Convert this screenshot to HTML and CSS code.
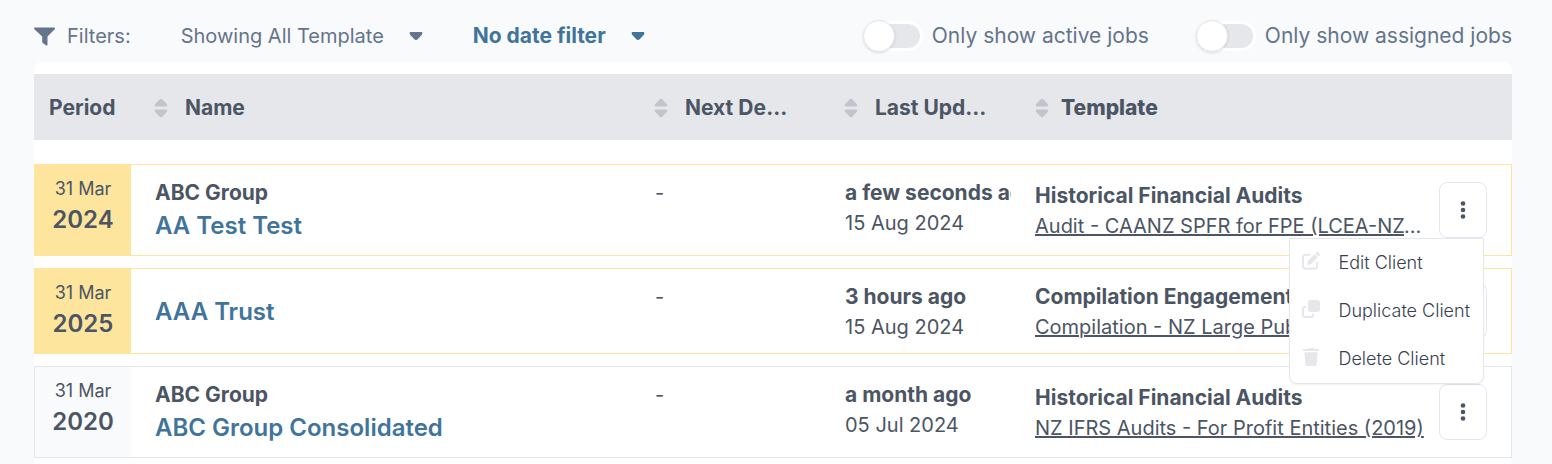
FILE: index.html
```html
<!DOCTYPE html>
<html lang="en">
<head>
  <meta charset="utf-8">
  <title>Jobs</title>
  <link rel="stylesheet" href="styles.css">
</head>
<body>
  <svg class="sprite" width="0" height="0" aria-hidden="true">
    <symbol id="caret" viewBox="0 0 14 10">
      <path d="M1.500 1h11c.9 0 1.100 1 .7 1.900-.3.700-.7 1.300-1.300 1.900L8.700 8.300c-1 1-2.400 1-3.400 0L2.100 4.800C1.500 4.200 1.100 3.600.8 2.900.4 2 .6 1 1.500 1z"/>
    </symbol>
    <symbol id="sort" viewBox="0 0 14 20">
      <path d="M5.700 1.300c.8-.8 1.800-.8 2.600 0l4.400 4.600c1 1.100.6 2.600-.6 2.600H1.900C.7 8.500.3 7 1.300 5.900zM1.900 11.500h10.200c1.200 0 1.600 1.500.6 2.600l-4.400 4.600c-.8.800-1.800.800-2.600 0l-4.400-4.600c-1-1.100-.6-2.600.6-2.600z"/>
    </symbol>
    <symbol id="dots" viewBox="0 0 6 20">
      <circle cx="3" cy="3.500" r="2.300"/><circle cx="3" cy="10" r="2.300"/><circle cx="3" cy="16.500" r="2.300"/>
    </symbol>
  </svg>

  <div class="page">
    <div class="filters">
      <div class="filters-title">
        <svg width="21" height="19" viewBox="0 0 21 19"><path d="M1 .5h19c1 0 1.300 1 .7 1.700L13.500 9.500v8c0 .9-.9 1.300-1.600.8l-3.100-2.300c-.4-.3-.6-.7-.6-1.200V9.500L.4 2.200C-.3 1.500 0 .5 1 .5z"/></svg>
        <span>Filters:</span>
      </div>
      <label class="dropdown">
        <select aria-label="Template filter"><option>Showing All Template</option></select>
        <svg width="14" height="10"><use href="#caret"/></svg>
      </label>
      <label class="dropdown dropdown-active">
        <select aria-label="Date filter"><option>No date filter</option></select>
        <svg width="14" height="10"><use href="#caret"/></svg>
      </label>
      <div class="toggles">
        <label class="toggle"><input type="checkbox"><span>Only show active jobs</span></label>
        <label class="toggle"><input type="checkbox"><span>Only show assigned jobs</span></label>
      </div>
    </div>

    <div class="panel">
      <table class="jobs">
        <colgroup>
          <col class="col-period">
          <col class="col-name">
          <col class="col-date">
          <col class="col-date">
          <col class="col-template">
          <col class="col-actions">
        </colgroup>
        <thead>
          <tr>
            <th class="period-head">Period</th>
            <th><button class="sort"><svg width="14" height="20"><use href="#sort"/></svg><span>Name</span></button></th>
            <th><button class="sort"><svg width="14" height="20"><use href="#sort"/></svg><span>Next Deadline</span></button></th>
            <th><button class="sort"><svg width="14" height="20"><use href="#sort"/></svg><span>Last Updated</span></button></th>
            <th class="template-head"><button class="sort"><svg width="14" height="20"><use href="#sort"/></svg><span>Template</span></button></th>
            <th></th>
          </tr>
        </thead>
        <tbody>
          <tr class="due">
            <td class="period"><div class="day">31 Mar</div><div class="year">2024</div></td>
            <td class="name"><div class="strong">ABC Group</div><a href="#">AA Test Test</a></td>
            <td class="date">-</td>
            <td class="date"><div class="strong">a few seconds ago</div><div>15 Aug 2024</div></td>
            <td class="template"><div class="strong">Historical Financial Audits</div><div class="clip"><a href="#">Audit - CAANZ SPFR for FPE (LCEA-NZ-2023)</a></div></td>
            <td class="actions">
              <div class="menu-wrap">
                <button class="more" aria-label="Job actions"><svg width="6" height="20"><use href="#dots"/></svg></button>
                <div class="menu">
                  <button>
                    <svg width="18" height="18" viewBox="0 0 18 18"><path d="M7.500 2.700H3.500A2.500 2.500 0 0 0 1 5.200v9.100a2.500 2.500 0 0 0 2.500 2.500h9.100a2.500 2.500 0 0 0 2.500-2.500v-4" fill="none" stroke="currentColor" stroke-width="2" stroke-linecap="round"/><path d="M12.300 2.300l3.300 3.300-6.100 6.100c-.3.300-.6.500-1 .6l-2.400.6c-.7.200-1.200-.4-1-1l.6-2.500c.1-.4.300-.7.600-1zM13.200 1.400l.8-.8c.8-.8 2-.8 2.700 0l.6.600c.8.8.8 2 0 2.700l-.8.8z"/></svg>
                    <span>Edit Client</span>
                  </button>
                  <button>
                    <svg width="18" height="18" viewBox="0 0 18 18"><rect x="6" y="0" width="12" height="12" rx="2.500"/><path d="M4 7H3a2 2 0 0 0-2 2v6a2 2 0 0 0 2 2h6a2 2 0 0 0 2-2v-1" fill="none" stroke="currentColor" stroke-width="2"/></svg>
                    <span>Duplicate Client</span>
                  </button>
                  <button>
                    <svg width="18" height="18" viewBox="0 0 18 18"><path d="M6.500 0h5l.8 1H16c.6 0 1 .4 1 1s-.4 1-1 1H2c-.6 0-1-.4-1-1s.4-1 1-1h3.700zM2.500 4.200h13l-.8 12c-.1 1-.8 1.800-1.800 1.800H5.100c-1 0-1.700-.8-1.800-1.800z"/></svg>
                    <span>Delete Client</span>
                  </button>
                </div>
              </div>
            </td>
          </tr>
          <tr class="due">
            <td class="period"><div class="day">31 Mar</div><div class="year">2025</div></td>
            <td class="name"><a href="#">AAA Trust</a></td>
            <td class="date">-</td>
            <td class="date"><div class="strong">3 hours ago</div><div>15 Aug 2024</div></td>
            <td class="template"><div class="strong">Compilation Engagements</div><div class="clip"><a href="#">Compilation - NZ Large Public</a></div></td>
            <td class="actions"><button class="more" aria-label="Job actions"><svg width="6" height="20"><use href="#dots"/></svg></button></td>
          </tr>
          <tr>
            <td class="period"><div class="day">31 Mar</div><div class="year">2020</div></td>
            <td class="name"><div class="strong">ABC Group</div><a href="#">ABC Group Consolidated</a></td>
            <td class="date">-</td>
            <td class="date"><div class="strong">a month ago</div><div>05 Jul 2024</div></td>
            <td class="template"><div class="strong">Historical Financial Audits</div><div class="clip"><a href="#">NZ IFRS Audits - For Profit Entities (2019)</a></div></td>
            <td class="actions"><button class="more" aria-label="Job actions"><svg width="6" height="20"><use href="#dots"/></svg></button></td>
          </tr>
        </tbody>
      </table>
    </div>
  </div>
</body>
</html>
```

FILE: styles.css
```css
* {
  box-sizing: border-box;
}

body {
  margin: 0;
  background-color: #f9fafc;
  color: #4b5563;
  font-family: Inter, "Liberation Sans", sans-serif;
  font-size: 20px;
  line-height: 30px;
}

button,
select {
  padding: 0;
  border: none;
  background: none;
  color: inherit;
  font: inherit;
  cursor: pointer;
}

svg {
  flex: none;
  fill: currentColor;
}

.sprite {
  position: absolute;
}

.page {
  padding: 0 40px 0 34px;
}

/* Filter bar */
.filters {
  display: flex;
  align-items: center;
  gap: 50px;
  padding: 20px 0 10px;
  color: #64748b;
  line-height: 32px;
  white-space: nowrap;
}

.filters-title {
  display: flex;
  align-items: center;
  gap: 12px;
}

.dropdown {
  display: flex;
  align-items: center;
  gap: 24px;
}

.dropdown select {
  appearance: none;
}

.dropdown-active {
  color: #41749a;
  font-size: 21px;
  font-weight: 700;
}

.toggles {
  display: flex;
  gap: 50px;
  margin-left: auto;
  font-size: 21px;
}

.toggle {
  display: flex;
  align-items: center;
  gap: 12px;
}

.toggle input {
  appearance: none;
  position: relative;
  width: 54px;
  height: 24px;
  margin: 0;
  border-radius: 12px;
  background-color: #e5e7eb;
  box-shadow: 0 0 0 3px #fff;
}

.toggle input::before {
  content: "";
  position: absolute;
  top: -4px;
  left: -3px;
  width: 30px;
  height: 30px;
  border: 1px solid #e5e7eb;
  border-radius: 50%;
  background-color: #fff;
  box-shadow: 0 1px 3px rgba(0, 0, 0, 0.12);
}

.toggle input:checked::before {
  left: 27px;
}

/* Table */
.panel {
  border-radius: 8px 8px 0 0;
  background-color: #fff;
}

.jobs {
  width: 100%;
  border-spacing: 0 12px;
  table-layout: fixed;
}

.col-period {
  width: 97px;
}

.col-date {
  width: 190px;
}

.col-template {
  width: 428px;
}

.col-actions {
  width: 73px;
}

.jobs th {
  height: 66px;
  padding: 1px 24px 0 23px;
  background-color: #e5e7eb;
  font-size: 21px;
  font-weight: 700;
  text-align: left;
}

.jobs .period-head {
  padding: 1px 0 0 15px;
}

.sort {
  display: flex;
  align-items: center;
  gap: 17px;
  width: 100%;
  text-align: left;
}

.sort svg {
  color: #c1c5cb;
}

.sort span {
  overflow: hidden;
  text-overflow: ellipsis;
  white-space: nowrap;
}

.jobs .template-head {
  padding-left: 24px;
  font-weight: 800;
}

.template-head .sort {
  gap: 12px;
}

/* extra gap under the header */
.jobs tbody::before {
  content: "";
  display: table-row;
}

.jobs td {
  padding: 13px 0 11px 24px;
  border: solid #e5e7eb;
  border-width: 1px 0;
  white-space: nowrap;
}

.jobs td:first-child {
  border-left-width: 1px;
}

.jobs td:last-child {
  border-right-width: 1px;
}

.jobs .due td {
  border-color: #fde59e;
}

.jobs .period {
  padding: 12px 0 0;
  background-color: #f9fafc;
  text-align: center;
  vertical-align: top;
}

.jobs .due .period {
  background-color: #fde59e;
}

.day {
  font-size: 18px;
  line-height: 24px;
}

.year {
  font-size: 24px;
  font-weight: 600;
  line-height: 38px;
}

.strong {
  font-size: 21px;
  font-weight: 700;
}

.name a {
  display: block;
  color: #41749a;
  font-size: 24px;
  font-weight: 600;
  line-height: 36px;
  text-decoration: none;
}

.jobs .date {
  overflow: hidden;
  vertical-align: top;
}

.jobs .template {
  padding-right: 12px;
}

.clip {
  overflow: hidden;
  text-overflow: ellipsis;
}

.clip a {
  color: inherit;
  text-decoration-thickness: 2px;
}

.jobs .actions {
  padding: 0;
}

.menu-wrap {
  position: relative;
  width: 48px;
}

.more {
  display: flex;
  align-items: center;
  justify-content: center;
  width: 48px;
  height: 56px;
  border: 1px solid #e2e8f0;
  border-radius: 8px;
  background-color: #fff;
}

/* Row menu */
.menu {
  position: absolute;
  top: 100%;
  right: 3px;
  z-index: 1;
  border: 1px solid #e5e7eb;
  border-radius: 0 0 8px 8px;
  background-color: #fff;
  box-shadow: 0 1px 2px rgba(0, 0, 0, 0.05);
}

.menu button {
  display: flex;
  align-items: center;
  gap: 18px;
  width: 100%;
  height: 48px;
  padding: 0 13px 0 12px;
  color: #374151;
  font-size: 18px;
  font-weight: 300;
}

.menu svg {
  margin-bottom: 4px;
  color: #e5e7eb;
}
```
